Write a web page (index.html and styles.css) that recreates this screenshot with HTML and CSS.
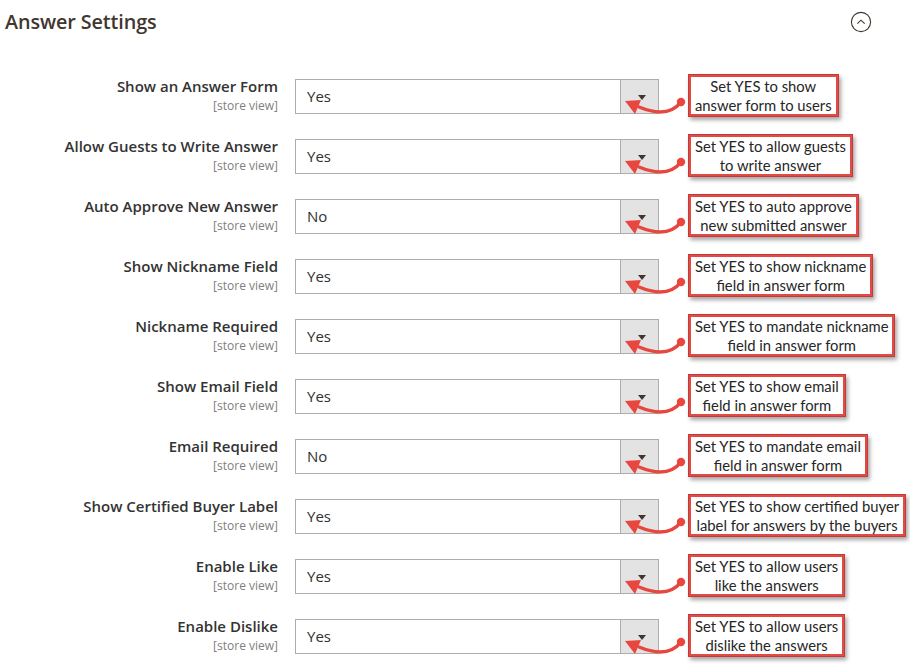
FILE: index.html
```html
<!DOCTYPE html>
<html lang="en">
<head>
<meta charset="utf-8">
<title>Answer Settings</title>
<link rel="stylesheet" href="styles.css">
</head>
<body>
<div class="page">
  <header class="section-head">
    <h2 class="section-title">Answer Settings</h2>
    <span class="toggle">
      <svg width="22" height="22" viewBox="0 0 22 22"><circle cx="11" cy="11" r="9.6" fill="none" stroke="#41362f" stroke-width="1.1"/><path d="M7.3 12.6 L11 9.2 L14.7 12.6" fill="none" stroke="#41362f" stroke-width="1.1"/></svg>
    </span>
  </header>

  <div class="rows">
    <div class="row">
      <div class="label"><span class="name">Show an Answer Form</span><span class="scope">[store view]</span></div>
      <div class="select"><span class="value">Yes</span><span class="btn"><i class="caret"></i></span></div>
      <div class="note">
        <svg class="pointer" width="70" height="40" viewBox="0 0 70 40"><path d="M61 23 Q48 40 19 28" fill="none" stroke="#e8463f" stroke-width="3.4" stroke-linecap="round"/><circle cx="61" cy="23" r="4.2" fill="#e8463f"/><polygon points="5,22 21,21 15,35" fill="#e8463f"/></svg>
        <div class="callout">Set YES to show<br>answer form to users</div>
      </div>
    </div>

    <div class="row">
      <div class="label"><span class="name">Allow Guests to Write Answer</span><span class="scope">[store view]</span></div>
      <div class="select"><span class="value">Yes</span><span class="btn"><i class="caret"></i></span></div>
      <div class="note">
        <svg class="pointer" width="70" height="40" viewBox="0 0 70 40"><path d="M61 23 Q48 40 19 28" fill="none" stroke="#e8463f" stroke-width="3.4" stroke-linecap="round"/><circle cx="61" cy="23" r="4.2" fill="#e8463f"/><polygon points="5,22 21,21 15,35" fill="#e8463f"/></svg>
        <div class="callout">Set YES to allow guests<br>to write answer</div>
      </div>
    </div>

    <div class="row">
      <div class="label"><span class="name">Auto Approve New Answer</span><span class="scope">[store view]</span></div>
      <div class="select"><span class="value">No</span><span class="btn"><i class="caret"></i></span></div>
      <div class="note">
        <svg class="pointer" width="70" height="40" viewBox="0 0 70 40"><path d="M61 23 Q48 40 19 28" fill="none" stroke="#e8463f" stroke-width="3.4" stroke-linecap="round"/><circle cx="61" cy="23" r="4.2" fill="#e8463f"/><polygon points="5,22 21,21 15,35" fill="#e8463f"/></svg>
        <div class="callout">Set YES to auto approve<br>new submitted answer</div>
      </div>
    </div>

    <div class="row">
      <div class="label"><span class="name">Show Nickname Field</span><span class="scope">[store view]</span></div>
      <div class="select"><span class="value">Yes</span><span class="btn"><i class="caret"></i></span></div>
      <div class="note">
        <svg class="pointer" width="70" height="40" viewBox="0 0 70 40"><path d="M61 23 Q48 40 19 28" fill="none" stroke="#e8463f" stroke-width="3.4" stroke-linecap="round"/><circle cx="61" cy="23" r="4.2" fill="#e8463f"/><polygon points="5,22 21,21 15,35" fill="#e8463f"/></svg>
        <div class="callout">Set YES to show nickname<br>field in answer form</div>
      </div>
    </div>

    <div class="row">
      <div class="label"><span class="name">Nickname Required</span><span class="scope">[store view]</span></div>
      <div class="select"><span class="value">Yes</span><span class="btn"><i class="caret"></i></span></div>
      <div class="note">
        <svg class="pointer" width="70" height="40" viewBox="0 0 70 40"><path d="M61 23 Q48 40 19 28" fill="none" stroke="#e8463f" stroke-width="3.4" stroke-linecap="round"/><circle cx="61" cy="23" r="4.2" fill="#e8463f"/><polygon points="5,22 21,21 15,35" fill="#e8463f"/></svg>
        <div class="callout">Set YES to mandate nickname<br>field in answer form</div>
      </div>
    </div>

    <div class="row">
      <div class="label"><span class="name">Show Email Field</span><span class="scope">[store view]</span></div>
      <div class="select"><span class="value">Yes</span><span class="btn"><i class="caret"></i></span></div>
      <div class="note">
        <svg class="pointer" width="70" height="40" viewBox="0 0 70 40"><path d="M61 23 Q48 40 19 28" fill="none" stroke="#e8463f" stroke-width="3.4" stroke-linecap="round"/><circle cx="61" cy="23" r="4.2" fill="#e8463f"/><polygon points="5,22 21,21 15,35" fill="#e8463f"/></svg>
        <div class="callout">Set YES to show email<br>field in answer form</div>
      </div>
    </div>

    <div class="row">
      <div class="label"><span class="name">Email Required</span><span class="scope">[store view]</span></div>
      <div class="select"><span class="value">No</span><span class="btn"><i class="caret"></i></span></div>
      <div class="note">
        <svg class="pointer" width="70" height="40" viewBox="0 0 70 40"><path d="M61 23 Q48 40 19 28" fill="none" stroke="#e8463f" stroke-width="3.4" stroke-linecap="round"/><circle cx="61" cy="23" r="4.2" fill="#e8463f"/><polygon points="5,22 21,21 15,35" fill="#e8463f"/></svg>
        <div class="callout">Set YES to mandate email<br>field in answer form</div>
      </div>
    </div>

    <div class="row">
      <div class="label"><span class="name">Show Certified Buyer Label</span><span class="scope">[store view]</span></div>
      <div class="select"><span class="value">Yes</span><span class="btn"><i class="caret"></i></span></div>
      <div class="note">
        <svg class="pointer" width="70" height="40" viewBox="0 0 70 40"><path d="M61 23 Q48 40 19 28" fill="none" stroke="#e8463f" stroke-width="3.4" stroke-linecap="round"/><circle cx="61" cy="23" r="4.2" fill="#e8463f"/><polygon points="5,22 21,21 15,35" fill="#e8463f"/></svg>
        <div class="callout">Set YES to show certified buyer<br>label for answers by the buyers</div>
      </div>
    </div>

    <div class="row">
      <div class="label"><span class="name">Enable Like</span><span class="scope">[store view]</span></div>
      <div class="select"><span class="value">Yes</span><span class="btn"><i class="caret"></i></span></div>
      <div class="note">
        <svg class="pointer" width="70" height="40" viewBox="0 0 70 40"><path d="M61 23 Q48 40 19 28" fill="none" stroke="#e8463f" stroke-width="3.4" stroke-linecap="round"/><circle cx="61" cy="23" r="4.2" fill="#e8463f"/><polygon points="5,22 21,21 15,35" fill="#e8463f"/></svg>
        <div class="callout">Set YES to allow users<br>like the answers</div>
      </div>
    </div>

    <div class="row">
      <div class="label"><span class="name">Enable Dislike</span><span class="scope">[store view]</span></div>
      <div class="select"><span class="value">Yes</span><span class="btn"><i class="caret"></i></span></div>
      <div class="note">
        <svg class="pointer" width="70" height="40" viewBox="0 0 70 40"><path d="M61 23 Q48 40 19 28" fill="none" stroke="#e8463f" stroke-width="3.4" stroke-linecap="round"/><circle cx="61" cy="23" r="4.2" fill="#e8463f"/><polygon points="5,22 21,21 15,35" fill="#e8463f"/></svg>
        <div class="callout">Set YES to allow users<br>dislike the answers</div>
      </div>
    </div>
  </div>
</div>
</body>
</html>
```

FILE: styles.css
```css
* { box-sizing: border-box; }

html, body {
  margin: 0;
  padding: 0;
  background: #ffffff;
}

body {
  font-family: "Open Sans", "Noto Sans", sans-serif;
  color: #303030;
  width: 910px;
  height: 669px;
  overflow: hidden;
}

.section-head {
  display: flex;
  align-items: center;
  justify-content: space-between;
  height: 44px;
  padding: 0 38px 0 5px;
}

.section-title {
  margin: 0;
  font-size: 19.8px;
  font-weight: 600;
  color: #41362f;
  line-height: 24px;
  letter-spacing: -0.1px;
}

.toggle {
  display: flex;
  width: 22px;
  height: 22px;
}

.rows {
  display: flex;
  flex-direction: column;
  gap: 25px;
  padding-top: 35px;
}

.row {
  position: relative;
  display: grid;
  grid-template-columns: 278px 364px 1fr;
  grid-template-rows: 35px;
  column-gap: 17px;
  align-items: start;
}

.label {
  display: flex;
  flex-direction: column;
  align-items: flex-end;
  text-align: right;
  margin-top: -3px;
}

.name {
  font-size: 15px;
  font-weight: 600;
  line-height: 21px;
  color: #333333;
}

.scope {
  font-size: 12px;
  line-height: 17px;
  color: #808080;
}

.select {
  display: flex;
  height: 35px;
  border: 1px solid #adadad;
  background: #ffffff;
}

.value {
  flex: 1;
  padding-left: 11px;
  font-size: 15px;
  line-height: 33px;
  color: #303030;
}

.btn {
  width: 38px;
  border-left: 1px solid #adadad;
  background: #e3e3e3;
  display: flex;
  justify-content: center;
  padding-top: 15px;
}

.caret {
  display: block;
  width: 0;
  height: 0;
  border-left: 4px solid transparent;
  border-right: 4px solid transparent;
  border-top: 5px solid #41362f;
  margin-left: 4px;
}

.note {
  position: relative;
  height: 35px;
}

.pointer {
  position: absolute;
  left: -56px;
  top: 0;
  overflow: visible;
}

.callout {
  position: relative;
  display: inline-block;
  margin-left: 12px;
  margin-top: -5px;
  padding: 0 4px;
  border: 3px solid #e24a45;
  outline: 1px solid #c43a36;
  outline-offset: -1px;
  background: #ffffff;
  box-shadow: 2px 3px 4px rgba(0, 0, 0, 0.35);
  font-family: "Lato", "Open Sans", sans-serif;
  font-size: 14.8px;
  line-height: 18.5px;
  color: #262626;
  text-align: center;
  white-space: nowrap;
}
```
